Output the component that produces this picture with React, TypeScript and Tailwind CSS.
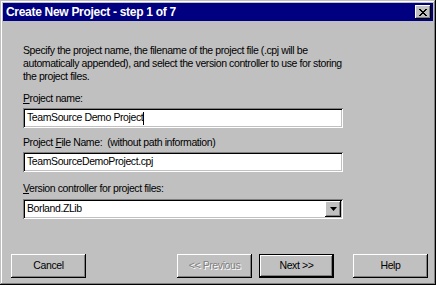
import React from 'react';

const raised =
  'bg-[#c0c0c0] shadow-[inset_-1px_-1px_#000,inset_1px_1px_#fff,inset_-2px_-2px_#808080]';
const sunken =
  'bg-white shadow-[inset_1px_1px_#808080,inset_-1px_-1px_#fff,inset_2px_2px_#000,inset_-2px_-2px_#c0c0c0]';

function Field({ label, children }: { label: React.ReactNode; children: React.ReactNode }) {
  return (
    <div className="flex flex-col">
      <div className="h-[13px] leading-[13px]">{label}</div>
      {children}
    </div>
  );
}

function Button({
  children,
  disabled,
  isDefault,
}: {
  children: React.ReactNode;
  disabled?: boolean;
  isDefault?: boolean;
}) {
  const inner = (
    <div
      className={`flex items-center justify-center ${raised} ${
        isDefault ? 'w-[73px] h-[22px]' : 'w-[75px] h-[24px]'
      } ${disabled ? 'text-[#808080] [text-shadow:1px_1px_#fff]' : 'text-black'}`}
    >
      {children}
    </div>
  );
  if (isDefault) {
    return <div className="border border-black">{inner}</div>;
  }
  return inner;
}

export default function App() {
  return (
    <div
      className="w-[436px] h-[285px] bg-[#c0c0c0] p-[3px] flex flex-col text-[10.5px] tracking-[-0.4px] text-black shadow-[inset_-1px_-1px_#000,inset_1px_1px_#c0c0c0,inset_-2px_-2px_#808080,inset_2px_2px_#fff]"
      style={{ fontFamily: '"Liberation Sans", Arial, sans-serif' }}
    >
      <div className="h-[18px] bg-[#000080] flex items-center justify-between pl-[3px] pr-[2px]">
        <span className="text-white font-bold text-[12px] tracking-[-0.3px] leading-none">
          Create New Project - step 1 of 7
        </span>
        <div className={`w-[16px] h-[14px] flex items-center justify-center ${raised}`}>
          <svg width="8" height="7" viewBox="0 0 8 7">
            <path d="M0 0h2v1h1v1h2V1h1V0h2v1h-1v1h-1v1h-1v1h1v1h1v1h1v1H6V6H5V5H3v1H2v1H0V6h1V5h1V4h1V3H2V2H1V1H0z" fill="#000" />
          </svg>
        </div>
      </div>

      <div className="flex flex-col pl-[20px] pt-[23px]">
        <p className="leading-[13px] w-[360px]">
          Specify the project name, the filename of the project file (.cpj will be
          <br />
          automatically appended), and select the version controller to use for storing
          <br />
          the project files.
        </p>

        <div className="flex flex-col mt-[9px]">
          <Field
            label={
              <>
                <u>P</u>roject name:
              </>
            }
          >
            <div className={`mt-[3px] h-[20px] w-[320px] ${sunken} flex items-center px-[4px]`}>
              TeamSource Demo Project<span className="w-px h-[13px] bg-black" />
            </div>
          </Field>

          <div className="mt-[8px]">
            <Field
              label={
                <>
                  Project <u>F</u>ile Name:&nbsp; (without path information)
                </>
              }
            >
              <div className={`mt-[3px] h-[20px] w-[320px] ${sunken} flex items-center px-[4px]`}>
                TeamSourceDemoProject.cpj
              </div>
            </Field>
          </div>

          <div className="mt-[10px]">
            <Field
              label={
                <>
                  <u>V</u>ersion controller for project files:
                </>
              }
            >
              <div
                className={`mt-[4px] h-[20px] w-[320px] ${sunken} flex items-center justify-between pl-[4px] pr-[2px]`}
              >
                <span>Borland.ZLib</span>
                <div className={`w-[16px] h-[16px] flex items-center justify-center ${raised}`}>
                  <svg width="7" height="4" viewBox="0 0 7 4">
                    <path d="M0 0h7L3.5 4z" fill="#000" />
                  </svg>
                </div>
              </div>
            </Field>
          </div>
        </div>
      </div>

      <div className="mt-auto mb-[4px] flex items-center pl-[8px] pr-[5px]">
        <Button>Cancel</Button>
        <div className="ml-[91px]">
          <Button disabled>&lt;&lt; Previous</Button>
        </div>
        <div className="ml-[7px]">
          <Button isDefault>Next &gt;&gt;</Button>
        </div>
        <div className="ml-[19px]">
          <Button>Help</Button>
        </div>
      </div>
    </div>
  );
}
